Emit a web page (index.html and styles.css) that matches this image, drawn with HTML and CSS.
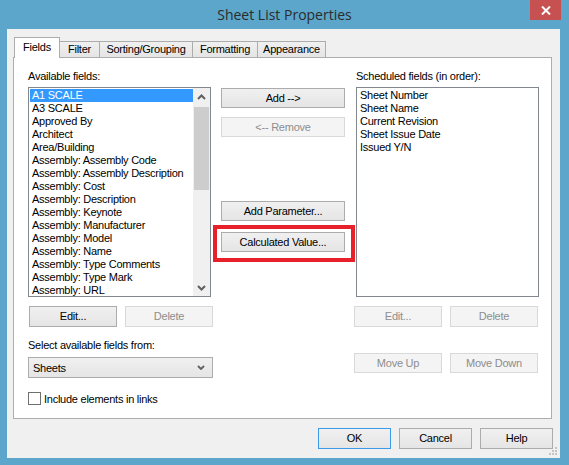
FILE: index.html
```html
<!DOCTYPE html>
<html>
<head>
<meta charset="utf-8">
<title>Sheet List Properties</title>
<link rel="stylesheet" href="styles.css">
</head>
<body>
<div class="window">
  <div class="titlebar">
    <div class="title">Sheet List Properties</div>
    <div class="close">
      <svg width="10" height="9" viewBox="0 0 10 9"><path d="M1 0.5 L9 8.5 M9 0.5 L1 8.5" stroke="#fff" stroke-width="2"/></svg>
    </div>
  </div>
  <div class="client">
    <div class="tabs">
      <div class="tab active t-fields">Fields</div>
      <div class="tab t-filter">Filter</div>
      <div class="tab t-sort">Sorting/Grouping</div>
      <div class="tab t-format">Formatting</div>
      <div class="tab t-appear">Appearance</div>
    </div>
    <div class="panel">
      <div class="col col-left">
        <div class="label">Available fields:</div>
        <div class="listbox">
          <div class="items">
            <div class="item sel">A1 SCALE</div>
            <div class="item">A3 SCALE</div>
            <div class="item">Approved By</div>
            <div class="item">Architect</div>
            <div class="item">Area/Building</div>
            <div class="item">Assembly: Assembly Code</div>
            <div class="item">Assembly: Assembly Description</div>
            <div class="item">Assembly: Cost</div>
            <div class="item">Assembly: Description</div>
            <div class="item">Assembly: Keynote</div>
            <div class="item">Assembly: Manufacturer</div>
            <div class="item">Assembly: Model</div>
            <div class="item">Assembly: Name</div>
            <div class="item">Assembly: Type Comments</div>
            <div class="item">Assembly: Type Mark</div>
            <div class="item">Assembly: URL</div>
          </div>
          <div class="scrollbar">
            <div class="sb-btn"><svg width="9" height="6" viewBox="0 0 9 6"><polyline points="1,5 4.5,1.5 8,5" fill="none" stroke="#606060" stroke-width="2"/></svg></div>
            <div class="thumb"></div>
            <div class="sb-space"></div>
            <div class="sb-btn"><svg width="9" height="6" viewBox="0 0 9 6"><polyline points="1,1 4.5,4.5 8,1" fill="none" stroke="#606060" stroke-width="2"/></svg></div>
          </div>
        </div>
        <div class="btnrow row-left">
          <div class="btn">Edit...</div>
          <div class="btn dis">Delete</div>
        </div>
        <div class="label label-select">Select available fields from:</div>
        <div class="dropdown">
          <span>Sheets</span>
          <svg width="8" height="5" viewBox="0 0 8 5"><polyline points="1,1 4,4 7,1" fill="none" stroke="#606060" stroke-width="1.8"/></svg>
        </div>
        <div class="checkrow">
          <span class="checkbox"></span>
          <span>Include elements in links</span>
        </div>
      </div>
      <div class="col col-mid">
        <div class="btn mbtn">Add --&gt;</div>
        <div class="btn mbtn dis b-remove">&lt;-- Remove</div>
        <div class="btn mbtn b-param">Add Parameter...</div>
        <div class="btn mbtn b-calc highlight">Calculated Value...</div>
      </div>
      <div class="col col-right">
        <div class="label label-r">Scheduled fields (in order):</div>
        <div class="listbox list-r">
          <div class="items items-r">
            <div class="item">Sheet Number</div>
            <div class="item">Sheet Name</div>
            <div class="item">Current Revision</div>
            <div class="item">Sheet Issue Date</div>
            <div class="item">Issued Y/N</div>
          </div>
        </div>
        <div class="btnrow">
          <div class="btn dis">Edit...</div>
          <div class="btn dis">Delete</div>
        </div>
        <div class="btnrow row-move">
          <div class="btn dis short">Move Up</div>
          <div class="btn dis short">Move Down</div>
        </div>
      </div>
    </div>
    <div class="footer">
      <div class="btn fbtn default">OK</div>
      <div class="btn fbtn">Cancel</div>
      <div class="btn fbtn">Help</div>
    </div>
    <svg class="grip" width="9" height="9" viewBox="0 0 9 9">
      <rect x="6" y="0" width="2" height="2" fill="#c4c4c4"/>
      <rect x="3" y="3" width="2" height="2" fill="#c4c4c4"/>
      <rect x="6" y="3" width="2" height="2" fill="#c4c4c4"/>
      <rect x="0" y="6" width="2" height="2" fill="#c4c4c4"/>
      <rect x="3" y="6" width="2" height="2" fill="#c4c4c4"/>
      <rect x="6" y="6" width="2" height="2" fill="#c4c4c4"/>
    </svg>
  </div>
</div>
</body>
</html>
```

FILE: styles.css
```css
* { box-sizing: border-box; }

body {
  margin: 0;
  width: 569px;
  height: 465px;
  overflow: hidden;
  background: #5ca6cb;
  font-family: "Liberation Sans", Arial, sans-serif;
  font-size: 11px;
  letter-spacing: -0.25px;
  color: #000;
}

.window {
  display: flex;
  flex-direction: column;
  height: 465px;
}

.titlebar {
  height: 29px;
  display: grid;
  grid-template-columns: 1fr auto 1fr;
  align-items: start;
}

.title {
  grid-column: 2;
  font-family: "Open Sans", "Noto Sans", sans-serif;
  font-size: 14px;
  letter-spacing: 0;
  color: #2b2b2b;
  line-height: 30px;
}

.close {
  grid-column: 3;
  justify-self: end;
  margin-right: 8px;
  width: 31px;
  height: 20px;
  background: #c75050;
  display: flex;
  align-items: center;
  justify-content: center;
}

.client {
  position: relative;
  margin-left: 7px;
  width: 553px;
  height: 429px;
  background: #f0f0f0;
  padding: 8px 8px 0 6px;
}

.tabs {
  display: flex;
  align-items: flex-end;
  height: 20px;
  padding-left: 1px;
}

.tab {
  height: 16px;
  border: 1px solid #acacac;
  border-bottom: none;
  background: linear-gradient(#f0f0f0, #e5e5e5);
  line-height: 15px;
  text-align: center;
  margin-left: -1px;
}

.tab.active {
  height: 21px;
  margin-bottom: -1px;
  margin-left: 0;
  background: #fff;
  position: relative;
  z-index: 1;
  line-height: 19px;
}

.t-fields { width: 46px; }
.t-filter { width: 41px; }
.t-sort { width: 94px; }
.t-format { width: 66px; }
.t-appear { width: 69px; }

.panel {
  width: 539px;
  height: 362px;
  border: 1px solid #adadad;
  background: #fff;
  display: flex;
  padding: 12px 0 0 14px;
}

.col {
  display: flex;
  flex-direction: column;
}

.col-left { width: 185px; }

.label {
  height: 13px;
  line-height: 13px;
  margin-bottom: 4px;
  white-space: nowrap;
}

.listbox {
  width: 183px;
  height: 210px;
  border: 1px solid #828790;
  background: #fff;
  display: flex;
  overflow: hidden;
}

.items {
  flex: 1;
  padding: 1px 0 0 1px;
  overflow: hidden;
}

.item {
  height: 13px;
  line-height: 13px;
  padding-left: 2px;
  white-space: nowrap;
}

.item.sel {
  background: #3399ff;
  color: #fff;
}

.scrollbar {
  width: 17px;
  background: #f0f0f0;
  display: flex;
  flex-direction: column;
}

.sb-btn {
  height: 17px;
  display: flex;
  align-items: center;
  justify-content: center;
}

.thumb {
  height: 83px;
  margin: 2px 1px 0;
  background: #cdcdcd;
}

.sb-space { flex: 1; }

.btnrow {
  display: flex;
  gap: 8px;
  margin-top: 9px;
}

.row-left { margin-left: 1px; }

.btn {
  width: 88px;
  height: 21px;
  border: 1px solid #acacac;
  background: linear-gradient(#f0f0f0, #e5e5e5);
  line-height: 19px;
  text-align: center;
  white-space: nowrap;
}

.btn.dis {
  background: #f4f4f4;
  border-color: #d9d9d9;
  color: #8d8d8d;
}

.btn.short {
  height: 20px;
  line-height: 18px;
}

.row-move { margin-top: 26px; }

.label-select {
  margin-top: 12px;
  margin-bottom: 5px;
}

.dropdown {
  width: 185px;
  height: 21px;
  border: 1px solid #acacac;
  background: linear-gradient(#f0f0f0, #e5e5e5);
  display: flex;
  align-items: center;
  justify-content: space-between;
  padding: 0 7px 0 4px;
}

.checkrow {
  margin-top: 14px;
  display: flex;
  align-items: center;
  gap: 3px;
  height: 13px;
}

.checkbox {
  width: 13px;
  height: 13px;
  border: 1px solid #707070;
  background: #fff;
}

.col-mid {
  width: 124px;
  margin-left: 8px;
  padding-top: 18px;
}

.mbtn {
  width: 124px;
  height: 20px;
  line-height: 18px;
}

.b-remove { margin-top: 9px; }
.b-param { margin-top: 64px; }
.b-calc { margin-top: 11px; }

.highlight { position: relative; }

.highlight::after {
  content: "";
  position: absolute;
  left: -9px;
  top: -8px;
  right: -11px;
  bottom: -11px;
  border: 4px solid #e8202a;
}

.col-right {
  width: 185px;
  margin-left: 9px;
}

.label-r,
.list-r { margin-left: 2px; }

.items-r { padding-left: 1px; }

.footer {
  display: flex;
  justify-content: flex-end;
  gap: 8px;
  margin-top: 9px;
  margin-right: -1px;
}

.fbtn {
  width: 73px;
  height: 21px;
}

.btn.default {
  border-color: #3c9ae8;
}

.grip {
  position: absolute;
  right: 2px;
  bottom: 2px;
}
```
